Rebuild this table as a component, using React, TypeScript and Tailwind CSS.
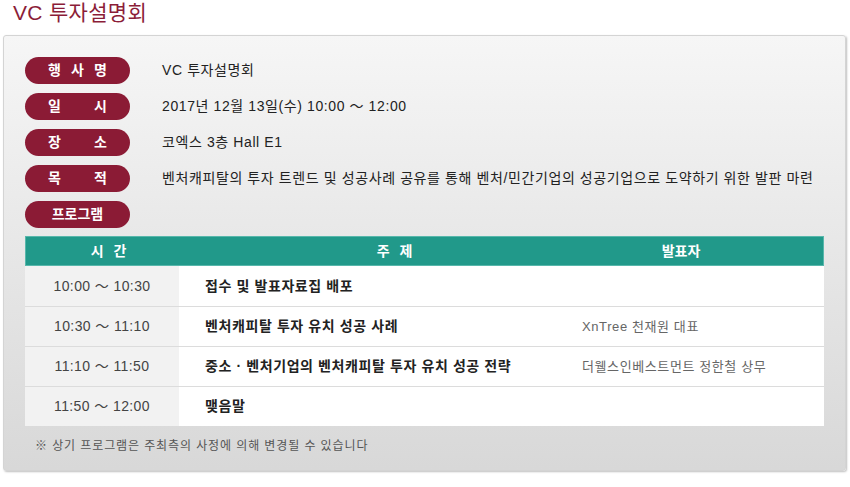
const font = { fontFamily: '"Liberation Sans", "Noto Sans CJK KR", sans-serif' };

const info = [
  { label: ["행", "사", "명"], value: "VC 투자설명회" },
  { label: ["일", "시"], value: "2017년 12월 13일(수) 10:00 ～ 12:00" },
  { label: ["장", "소"], value: "코엑스 3층 Hall E1" },
  { label: ["목", "적"], value: "벤처캐피탈의 투자 트렌드 및 성공사례 공유를 통해 벤처/민간기업의 성공기업으로 도약하기 위한 발판 마련" },
  { label: ["프로그램"], value: "" },
];

const rows = [
  { time: "10:00 ～ 10:30", topic: "접수 및 발표자료집 배포", speaker: "" },
  { time: "10:30 ～ 11:10", topic: "벤처캐피탈 투자 유치 성공 사례", speaker: "XnTree 천재원 대표" },
  { time: "11:10 ～ 11:50", topic: "중소 · 벤처기업의 벤처캐피탈 투자 유치 성공 전략", speaker: "더웰스인베스트먼트 정한철 상무" },
  { time: "11:50 ～ 12:00", topic: "맺음말", speaker: "" },
];

export default function App() {
  return (
    <div className="w-[850px] h-[487px] bg-white" style={font}>
      <h1 className="pl-[13px] pt-[1px] h-[35px] text-[21px] leading-[24px] tracking-[0.3px] text-[#8b1d38]">VC 투자설명회</h1>

      <div className="mx-[3px] w-[843px] rounded-[3px] border border-[#d4d4d4] bg-gradient-to-b from-[#f6f6f6] to-[#d8d8d8] pt-[21px] pl-[21px] pr-[20px] pb-[15px] shadow-[1px_1px_2px_rgba(0,0,0,0.25)]">
        {/* Info pills */}
        <div className="flex flex-col gap-[9px]">
          {info.map((item, i) => (
            <div key={i} className="flex items-center h-[27px]">
              <div className={`w-[105px] h-[27px] rounded-full bg-[#8b1b35] flex items-center ${item.label.length === 1 ? "justify-center" : "justify-between px-[23px]"} text-white text-[14px] font-bold`}>
                {item.label.map((c, j) => (
                  <span key={j}>{c}</span>
                ))}
              </div>
              <div className="ml-[32px] text-[14px] tracking-[0.6px] text-[#222]">{item.value}</div>
            </div>
          ))}
        </div>

        {/* Program table */}
        <div className="mt-[8px] w-[799px]">
          <div className="flex h-[30px] items-center bg-[#21998a] border border-[#57b7ab] text-white text-[14px] font-bold">
            <div className="w-[168px] text-center tracking-[3px]">시 간</div>
            <div className="w-[404px] text-center tracking-[3px]">주 제</div>
            <div className="w-[166px] text-center">발표자</div>
          </div>
          {rows.map((r, i) => (
            <div key={i} className={`flex h-[40px] ${i > 0 ? "border-t border-[#dcdcdc]" : ""}`}>
              <div className="w-[154px] bg-[#f2f2f2] flex items-center justify-center text-[14px] tracking-[0.4px] text-[#444]">{r.time}</div>
              <div className="flex-1 bg-white flex items-center">
                <div className="w-[377px] pl-[26px] text-[14px] font-semibold tracking-[0.6px] text-[#222]">{r.topic}</div>
                <div className="pl-[26px] text-[13px] tracking-[0.6px] text-[#666]">{r.speaker}</div>
              </div>
            </div>
          ))}
        </div>

        <p className="mt-[11px] pl-[10px] text-[12px] tracking-[0.9px] text-[#555]">※ 상기 프로그램은 주최측의 사정에 의해 변경될 수 있습니다</p>
      </div>
    </div>
  );
}
